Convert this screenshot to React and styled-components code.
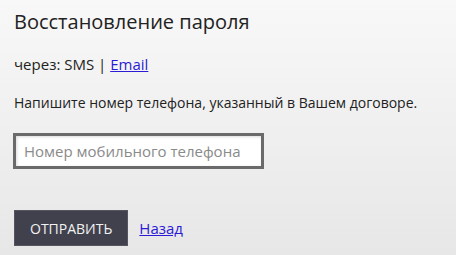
import React from 'react';
import styled, { createGlobalStyle } from 'styled-components';

const GlobalStyle = createGlobalStyle`
  html, body {
    margin: 0;
    padding: 0;
    height: 100%;
  }
  body {
    font-family: "Open Sans", "DejaVu Sans", sans-serif;
    color: #222;
    background: linear-gradient(to bottom, #f8f8f8 0%, #e7e7e7 100%);
    min-height: 255px;
  }
`;

const Page = styled.div`
  padding: 8px 14px;
  display: flex;
  flex-direction: column;
  align-items: flex-start;
`;

const Title = styled.h1`
  font-size: 20px;
  font-weight: 400;
  margin: 0 0 18px;
  line-height: 28px;
`;

const Text = styled.p`
  font-size: ${props => props.$size || 14}px;
  line-height: 20px;
  margin: 0 0 ${props => props.$gap || 19}px;
`;

const TextLink = styled.a`
  color: #2b1bd6;
  font-size: ${props => props.$size || 'inherit'};
  text-decoration: underline;
  cursor: pointer;
`;

const Input = styled.input`
  box-sizing: border-box;
  width: 251px;
  height: 36px;
  margin: 0 0 41px -1px;
  padding: 0 8px;
  border: 3px solid #6a6a6a;
  background: #fff;
  box-shadow: inset 1px 1px 3px rgba(0, 0, 0, 0.15);
  font-family: "Open Sans", "DejaVu Sans", sans-serif;
  font-size: 15px;
  color: #333;
  outline: none;

  &::placeholder {
    color: #8a8a8a;
  }
`;

const Actions = styled.div`
  display: flex;
  align-items: center;
  gap: 11px;
`;

const Button = styled.button`
  box-sizing: border-box;
  height: 36px;
  padding: 0 15px;
  background: #41414d;
  border: 1px solid #55555f;
  color: #f2f2f2;
  font-family: "Open Sans", "DejaVu Sans", sans-serif;
  font-size: 14px;
  text-transform: uppercase;
  cursor: pointer;
`;

const App = () => {
  return (
    <>
      <GlobalStyle />
      <Page>
        <Title>Восстановление пароля</Title>
        <Text $size={15} $gap={19}>
          через: SMS | <TextLink href="#">Email</TextLink>
        </Text>
        <Text $gap={20}>Напишите номер телефона, указанный в Вашем договоре.</Text>
        <Input type="text" placeholder="Номер мобильного телефона" />
        <Actions>
          <Button>Отправить</Button>
          <TextLink href="#" $size="15px">Назад</TextLink>
        </Actions>
      </Page>
    </>
  );
};

export default App;
